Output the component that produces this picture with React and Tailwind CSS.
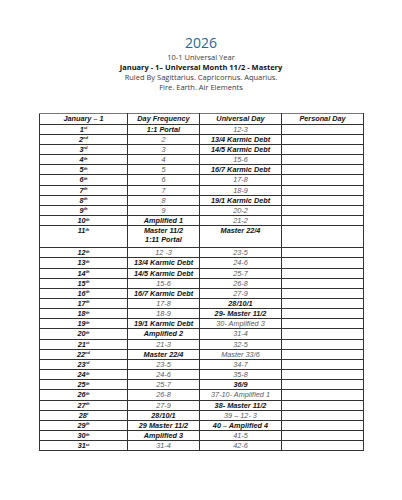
import React from 'react';

const rows = [
  ['1', 'st', ['1:1 Portal', true], ['12-3', false]],
  ['2', 'nd', ['2', false], ['13/4 Karmic Debt', true]],
  ['3', 'rd', ['3', false], ['14/5 Karmic Debt', true]],
  ['4', 'th', ['4', false], ['15-6', false]],
  ['5', 'th', ['5', false], ['16/7 Karmic Debt', true]],
  ['6', 'th', ['6', false], ['17-8', false]],
  ['7', 'th', ['7', false], ['18-9', false]],
  ['8', 'th', ['8', false], ['19/1 Karmic Debt', true]],
  ['9', 'th', ['9', false], ['20-2', false]],
  ['10', 'th', ['Amplified 1', true], ['21-2', false]],
  ['11', 'th', ['Master 11/2\n1:11 Portal', true], ['Master 22/4', true]],
  ['12', 'th', ['12 -3', false], ['23-5', false]],
  ['13', 'th', ['13/4 Karmic Debt', true], ['24-6', false]],
  ['14', 'th', ['14/5 Karmic Debt', true], ['25-7', false]],
  ['15', 'th', ['15-6', false], ['26-8', false]],
  ['16', 'th', ['16/7 Karmic Debt', true], ['27-9', false]],
  ['17', 'th', ['17-8', false], ['28/10/1', true]],
  ['18', 'th', ['18-9', false], ['29- Master 11/2', true]],
  ['19', 'th', ['19/1 Karmic Debt', true], ['30- Amplified 3', false]],
  ['20', 'th', ['Amplified 2', true], ['31-4', false]],
  ['21', 'st', ['21-3', false], ['32-5', false]],
  ['22', 'nd', ['Master 22/4', true], ['Master 33/6', false]],
  ['23', 'rd', ['23-5', false], ['34-7', false]],
  ['24', 'th', ['24-6', false], ['35-8', false]],
  ['25', 'th', ['25-7', false], ['36/9', true]],
  ['26', 'th', ['26-8', false], ['37-10- Amplified 1', false]],
  ['27', 'th', ['27-9', false], ['38- Master 11/2', true]],
  ['28', 't', ['28/10/1', true], ['39 – 12- 3', false]],
  ['29', 'th', ['29 Master 11/2', true], ['40 – Amplified 4', true]],
  ['30', 'th', ['Amplified 3', true], ['41-5', false]],
  ['31', 'st', ['31-4', false], ['42-6', false]],
];

const Cell = ({ text, bold }) => (
  <td
    className={`border border-[#333] px-1 text-center align-top whitespace-pre-line leading-[9px] ${
      bold ? 'font-bold text-[#111]' : 'text-[#5a5a5a]'
    }`}
  >
    {text}
  </td>
);

export default function App() {
  return (
    <div className="w-[402px] h-[500px] bg-white">
      <div className="pt-[34px] text-center">
        <h1 className="text-[14px] leading-[17px] font-normal text-[#2b6591] font-['Open_Sans',Arial,sans-serif]">
          2026
        </h1>
        <div className="mt-[2px] text-[7.5px] leading-[9.9px] text-[#3a3a3a] font-['Open_Sans',Arial,sans-serif]">
          <p>10-1 Universal Year</p>
          <p className="font-bold text-[#111]">January - 1– Universal Month 11/2 - Mastery</p>
          <p>Ruled By Sagittarius. Capricornus. Aquarius.</p>
          <p>Fire. Earth. Air Elements</p>
        </div>
      </div>

      <table className="mt-[20px] ml-[39px] w-[324px] table-fixed border-collapse italic text-[7.3px] font-['Liberation_Sans',Arial,sans-serif]">
        <colgroup>
          <col className="w-[88px]" />
          <col className="w-[72px]" />
          <col className="w-[82px]" />
          <col className="w-[82px]" />
        </colgroup>
        <thead>
          <tr className="h-[11px] font-bold text-[#111]">
            <th className="border border-[#333] border-t-[#777] leading-[9.5px]">January – 1</th>
            <th className="border border-[#333] border-t-[#777] leading-[9.5px]">Day Frequency</th>
            <th className="border border-[#333] border-t-[#777] leading-[9.5px]">Universal Day</th>
            <th className="border border-[#333] border-t-[#777] leading-[9.5px]">Personal Day</th>
          </tr>
        </thead>
        <tbody>
          {rows.map(([n, suf, freq, uni]) => (
            <tr key={n} className={n === '11' ? 'h-[22px]' : 'h-[10.17px]'}>
              <td className="border border-[#333] text-center align-top font-bold text-[#111] leading-[9px]">
                {n}
                <sup className="text-[4px] relative -top-[2.5px]">{suf}</sup>
              </td>
              <Cell text={freq[0]} bold={freq[1]} />
              <Cell text={uni[0]} bold={uni[1]} />
              <td className="border border-[#333]"></td>
            </tr>
          ))}
        </tbody>
      </table>
    </div>
  );
}
